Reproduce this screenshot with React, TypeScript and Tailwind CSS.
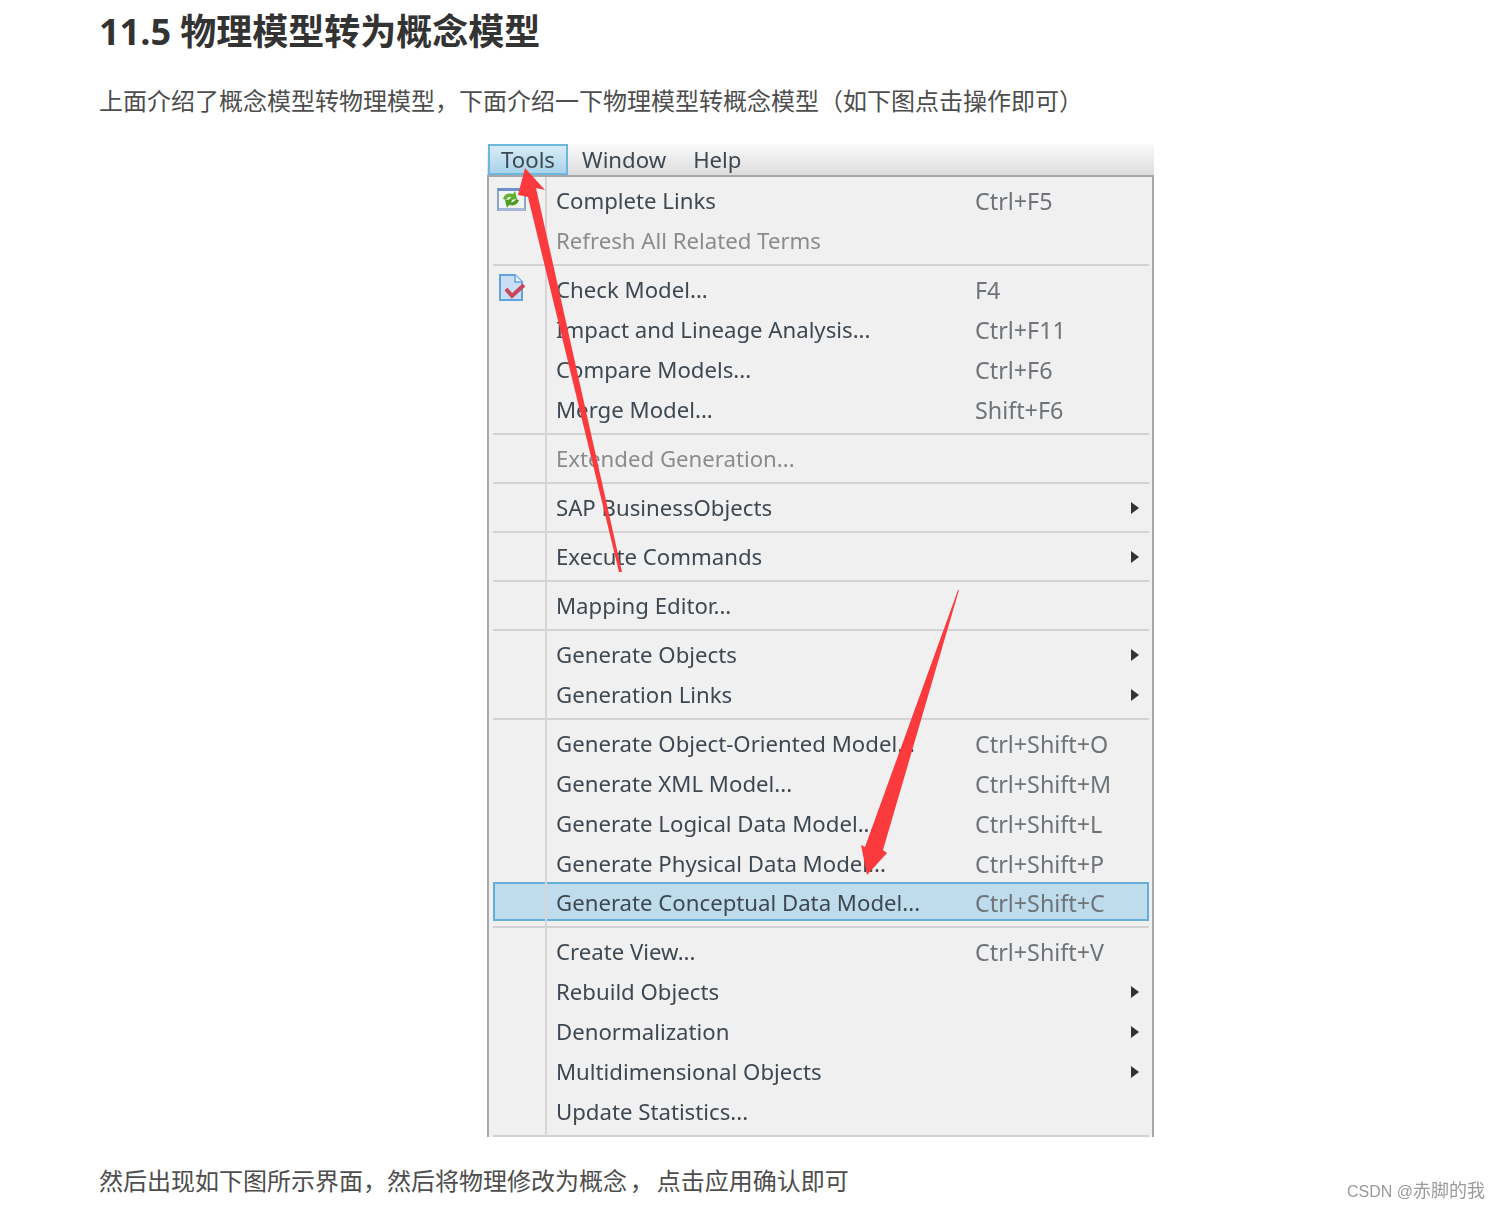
import React from 'react';

type Item = { label?: string; keys?: string; off?: boolean; sub?: boolean; on?: boolean; sep?: boolean };

const items: Item[] = [
  { label: 'Complete Links', keys: 'Ctrl+F5' },
  { label: 'Refresh All Related Terms', off: true },
  { sep: true },
  { label: 'Check Model...', keys: 'F4' },
  { label: 'Impact and Lineage Analysis...', keys: 'Ctrl+F11' },
  { label: 'Compare Models...', keys: 'Ctrl+F6' },
  { label: 'Merge Model...', keys: 'Shift+F6' },
  { sep: true },
  { label: 'Extended Generation...', off: true },
  { sep: true },
  { label: 'SAP BusinessObjects', sub: true },
  { sep: true },
  { label: 'Execute Commands', sub: true },
  { sep: true },
  { label: 'Mapping Editor...' },
  { sep: true },
  { label: 'Generate Objects', sub: true },
  { label: 'Generation Links', sub: true },
  { sep: true },
  { label: 'Generate Object-Oriented Model...', keys: 'Ctrl+Shift+O' },
  { label: 'Generate XML Model...', keys: 'Ctrl+Shift+M' },
  { label: 'Generate Logical Data Model...', keys: 'Ctrl+Shift+L' },
  { label: 'Generate Physical Data Model...', keys: 'Ctrl+Shift+P' },
  { label: 'Generate Conceptual Data Model...', keys: 'Ctrl+Shift+C', on: true },
  { sep: true },
  { label: 'Create View...', keys: 'Ctrl+Shift+V' },
  { label: 'Rebuild Objects', sub: true },
  { label: 'Denormalization', sub: true },
  { label: 'Multidimensional Objects', sub: true },
  { label: 'Update Statistics...' },
  { sep: true },
];

const LinksIcon = () => (
  <svg width="30" height="26" viewBox="0 0 30 26">
    <rect x="1" y="2" width="27" height="21" fill="#f1f5f4" stroke="#8ea4cc" strokeWidth="2" />
    <rect x="1" y="1" width="27" height="3" fill="#6f8fd0" />
    <rect x="2" y="21" width="26" height="3" fill="#a5b8da" />
    <path d="M6 12 Q8 5 16 7 L18 4 L20 12 L12 13 L14 10 Q11 9 9 13 Z" fill="#62b02c" />
    <path d="M22 13 Q20 20 12 18 L10 21 L8 13 L16 12 L14 15 Q17 16 19 12 Z" fill="#4f9c22" />
  </svg>
);

const CheckIcon = () => (
  <svg width="28" height="30" viewBox="0 0 28 30">
    <path d="M2 2 H17 L24 9 V27 H2 Z" fill="#c9def5" stroke="#5fa3e0" strokeWidth="2" />
    <path d="M17 2 V9 H24" fill="#eef5fc" stroke="#5fa3e0" strokeWidth="1.5" />
    <path d="M8 16 L14 23 L26 12" fill="none" stroke="#c8475a" strokeWidth="4" />
  </svg>
);

const Row = ({ item }: { item: Item }) => {
  if (item.sep) {
    return (
      <div className="h-[9px] pt-[3px] pl-[4px] pr-[3px]">
        <div className="h-[2px] w-full bg-[#d2d2d2]" />
      </div>
    );
  }
  return (
    <div className={`flex items-center ${item.on ? 'h-[39px] -mt-[2px] mb-[2px] pt-[3px] bg-[#bfdcec] outline-2 -outline-offset-2 outline-[#64aedb] ml-[4px] mr-[3px] pl-[63px]' : 'h-10 pl-[67px]'}`}>
      <span className={`w-[419px] whitespace-nowrap text-[22.2px] ${item.off ? 'text-[#8b8b8b]' : 'text-[#3d4852]'}`}>{item.label}</span>
      <span className="text-[23.3px] text-[#6d7378] whitespace-nowrap">{item.keys}</span>
      {item.sub && <div className="ml-auto mr-[13px] w-0 h-0 border-y-[6px] border-y-transparent border-l-[8px] border-l-[#333]" />}
    </div>
  );
};

const App: React.FC = () => {
  return (
    <div className="relative h-[1209px] w-full overflow-hidden bg-white pl-[99px] font-['Noto_Sans_CJK_SC','Noto_Sans',sans-serif] text-[#4d4d4d]">
      <h1 className="pt-[9px] text-[36px] leading-[46px] font-bold text-[#333] font-['Open_Sans','Noto_Sans_CJK_SC',sans-serif]">11.5 物理模型转为概念模型</h1>

      <p className="mt-[26px] text-[24px] leading-[38px]">上面介绍了概念模型转物理模型，下面介绍一下物理模型转概念模型（如下图点击操作即可）</p>

      <div className="relative ml-[388px] mt-[25px] w-[667px] h-[993px] font-['Noto_Sans',sans-serif] text-[22.2px] blur-[0.6px]">
        <div className="h-[33px] flex items-center bg-gradient-to-b from-[#fbfbfb] to-[#dcdcdc] border-b-2 border-[#a8a8a8] text-[#3d4852]">
          <div className="ml-[1px] w-[80px] h-[31px] flex items-center justify-center bg-gradient-to-b from-[#d8ebf5] to-[#a9d4ea] border-2 border-[#6db6de]">Tools</div>
          <span className="ml-[14px]">Window</span>
          <span className="ml-[27px]">Help</span>
        </div>

        <div className="relative h-[960px] bg-[#f0f0f0] border-x-2 border-[#a8a8a8] pt-[4px]">
          {items.map((item, i) => <Row key={i} item={item} />)}
          <div className="absolute left-[56px] top-0 bottom-0 w-[2px] bg-[#d6d6d6]" />
          <div className="absolute left-[8px] top-[10px]"><LinksIcon /></div>
          <div className="absolute left-[9px] top-[96px]"><CheckIcon /></div>
        </div>

        <svg className="absolute left-0 top-0 pointer-events-none" width="667" height="993" viewBox="487 144 667 993">
          <polygon points="525,168 545,190 536,188 622,572 619,572 528,197 518,195" fill="#fb3a3e" />
          <polygon points="959,590 883,850 887,853 867,875 861,845 865,847 958,590" fill="#fb3a3e" />
        </svg>
      </div>

      <p className="mt-[24px] text-[24px] leading-[38px] [word-spacing:-2.5px]">然后出现如下图所示界面，然后将物理修改为概念 ， 点击应用确认即可</p>

      <span className="absolute left-[1347px] top-[1179px] text-[16px] leading-6 text-[#9a9a9a] font-['Liberation_Sans','Noto_Sans_CJK_SC',sans-serif] blur-[0.3px]">CSDN @<span className="text-[18px]">赤脚的我</span></span>
    </div>
  );
};

export default App;
